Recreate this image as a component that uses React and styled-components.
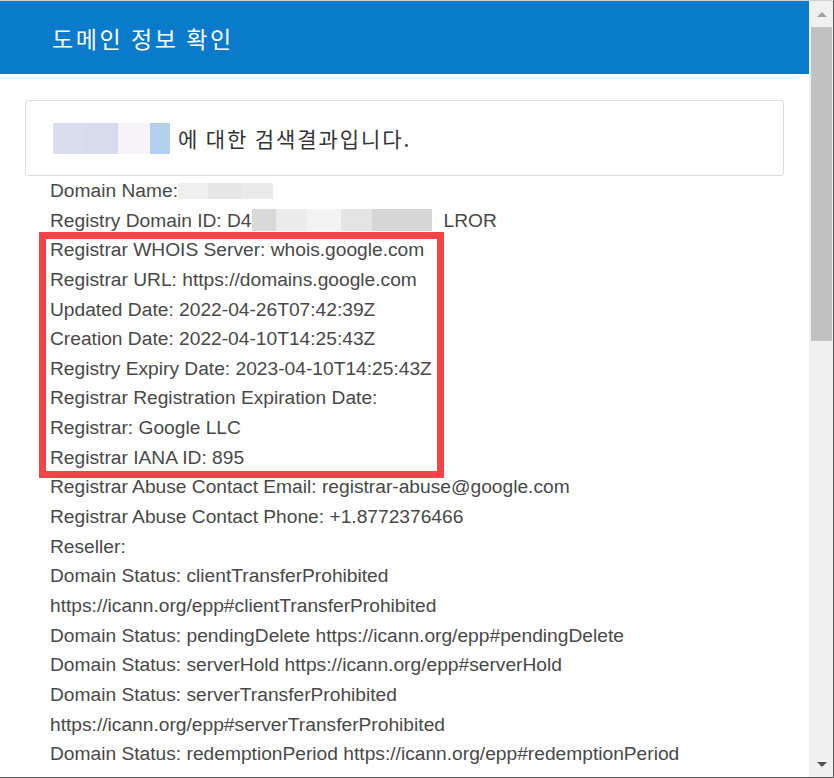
import React from "react";
import styled, { createGlobalStyle } from "styled-components";

const Global = createGlobalStyle`
  html, body { margin: 0; padding: 0; background: #ffffff; overflow: hidden; }
  * { box-sizing: border-box; }
`;

const Frame = styled.div`
  width: 834px;
  height: 778px;
  display: flex;
  border-top: 1px solid #cfcfcf;
  border-right: 1px solid #5a5a5a;
  border-bottom: 1px solid #5a5a5a;
  overflow: hidden;
  background: #ffffff;
`;

const Main = styled.div`
  position: relative;
  flex: 1;
  display: flex;
  flex-direction: column;
  overflow: hidden;
`;

const Header = styled.header`
  flex: none;
  height: 73px;
  background: #0a7bcb;
  display: flex;
  align-items: center;
  padding-left: 52px;
  color: #ffffff;
  font-family: "Noto Sans CJK KR", "Noto Sans", sans-serif;
  font-size: 23px;
  letter-spacing: 2.6px;
  font-weight: 400;
`;

const Body = styled.div`
  padding: 26px 25px 0 25px;
  display: flex;
  flex-direction: column;
`;

const SearchBox = styled.div`
  height: 76px;
  border: 1px solid #dcdcdc;
  border-radius: 3px;
  display: flex;
  align-items: center;
  padding-left: 27px;
  font-family: "Noto Sans CJK KR", "Noto Sans", sans-serif;
  font-size: 21px;
  color: #333333;
  letter-spacing: 1.9px;
`;

const Mask = styled.span`
  display: inline-flex;
  vertical-align: middle;
  height: ${(p) => p.$h}px;
  margin-right: ${(p) => p.$gap || 0}px;
`;

const Seg = styled.span`
  display: block;
  width: ${(p) => p.$w}px;
  height: 100%;
  background: ${(p) => p.$c};
`;

const Lines = styled.div`
  padding-left: 50px;
  font-family: "Liberation Sans", Arial, sans-serif;
  font-size: 19.2px;
  color: #484848;
`;

const Row = styled.div`
  height: 29.65px;
  line-height: 29.65px;
  white-space: nowrap;
  display: flex;
  align-items: center;
`;

const Highlight = styled.div`
  position: absolute;
  left: 39px;
  top: 231px;
  width: 405px;
  height: 246px;
  border: 7px solid #f54447;
  pointer-events: none;
`;

const Scrollbar = styled.div`
  flex: none;
  width: 24px;
  background: #f0f0f0;
  display: flex;
  flex-direction: column;
  align-items: center;
  padding: 0 1px 0 2px;
`;

const Arrow = styled.div`
  flex: none;
  height: ${(p) => p.$h}px;
  display: flex;
  align-items: center;
  justify-content: center;
  width: 100%;
  &::after {
    content: "";
    width: 0;
    height: 0;
    border-left: 5px solid transparent;
    border-right: 5px solid transparent;
    ${(p) =>
      p.$down
        ? `border-top: 5px solid ${p.$c};`
        : `border-bottom: 5px solid ${p.$c};`}
  }
`;

const Thumb = styled.div`
  flex: none;
  width: 100%;
  height: 314px;
  background: #c1c1c1;
`;

const Track = styled.div`
  flex: 1;
`;

const searchSegs = [
  [31, "#d9deed"],
  [34, "#d6dcee"],
  [32, "#f6f4f8"],
  [20, "#b3d0ec"],
];

const nameSegs = [
  [30, "#efefef"],
  [33, "#e5e5e5"],
  [32, "#e9e9e9"],
];

const idSegs = [
  [24, "#d9d9d9"],
  [31, "#ebebeb"],
  [34, "#f3f3f3"],
  [31, "#e4e4e4"],
  [60, "#d6d6d6"],
];

const MaskBlock = ({ segs, h, gap }) => (
  <Mask $h={h} $gap={gap}>
    {segs.map(([w, c], i) => (
      <Seg key={i} $w={w} $c={c} />
    ))}
  </Mask>
);

const rows = [
  "Registrar WHOIS Server: whois.google.com",
  "Registrar URL: https://domains.google.com",
  "Updated Date: 2022-04-26T07:42:39Z",
  "Creation Date: 2022-04-10T14:25:43Z",
  "Registry Expiry Date: 2023-04-10T14:25:43Z",
  "Registrar Registration Expiration Date:",
  "Registrar: Google LLC",
  "Registrar IANA ID: 895",
  "Registrar Abuse Contact Email: registrar-abuse@google.com",
  "Registrar Abuse Contact Phone: +1.8772376466",
  "Reseller:",
  "Domain Status: clientTransferProhibited",
  "https://icann.org/epp#clientTransferProhibited",
  "Domain Status: pendingDelete https://icann.org/epp#pendingDelete",
  "Domain Status: serverHold https://icann.org/epp#serverHold",
  "Domain Status: serverTransferProhibited",
  "https://icann.org/epp#serverTransferProhibited",
  "Domain Status: redemptionPeriod https://icann.org/epp#redemptionPeriod",
  "Domain Status: inactive https://icann.org/epp#inactive",
];

export default function App() {
  return (
    <>
      <Global />
      <Frame>
        <Main>
          <Header>도메인 정보 확인</Header>
          <Body>
            <SearchBox>
              <MaskBlock segs={searchSegs} h={31} gap={8} />
              에 대한 검색결과입니다.
            </SearchBox>
          </Body>
          <Lines>
            <Row>
              Domain Name:
              <MaskBlock segs={nameSegs} h={16} />
            </Row>
            <Row>
              Registry Domain ID: D4
              <MaskBlock segs={idSegs} h={22} gap={12} />
              LROR
            </Row>
            {rows.map((r, i) => (
              <Row key={i}>{r}</Row>
            ))}
          </Lines>
          <Highlight />
        </Main>
        <Scrollbar>
          <Arrow $h={26} $c="#a3a3a3" />
          <Thumb />
          <Track />
          <Arrow $h={26} $down $c="#505050" />
        </Scrollbar>
      </Frame>
    </>
  );
}
